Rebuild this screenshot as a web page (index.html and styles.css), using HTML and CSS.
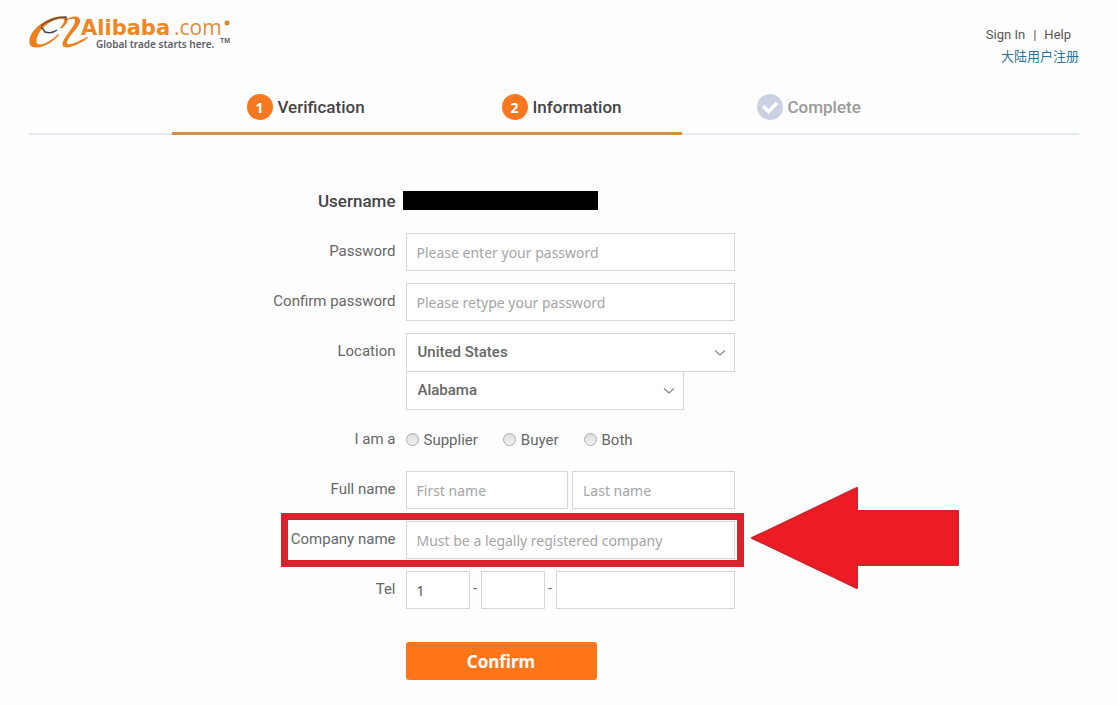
FILE: index.html
```html
<!DOCTYPE html>
<html lang="en">
<head>
<meta charset="utf-8">
<title>Alibaba.com - Registration</title>
<link rel="stylesheet" href="styles.css">
</head>
<body>
<div class="page">
  <header class="header">
    <a class="logo" href="#" aria-label="Alibaba.com">
      <svg width="206" height="38" viewBox="0 0 206 38" role="img">
        <path d="M37 3C26 0 9 9 3 19C-1 26-1 33 6 33.500C15 34 24 28 30 21L29 20C22 27 13 32 9 30C5 28 9 18 16 12C23 6 31 4 34 5C37 6 34 10 31 14L33 14.500C38 10 41 5 37 3Z" fill="#ee7f1d"/>
        <path d="M37 6C42 2 50 1 51 6C52 12 40 21 38 28C37 33 47 29 58 23L59 24C49 31 37 36 34 32C31 27 44 15 46 8C47 4 42 4 37 7Z" fill="#ee7f1d"/>
        <path d="M12 12Q23 3 37 3L37 6" fill="none" stroke="#6b4a36" stroke-width="1.300"/>
        <path d="M12 13L14 15L16 18Q23 20 28 16" fill="none" stroke="#45464c" stroke-width="1.500"/>
        <text class="logo-name" x="52" y="21">Alibaba</text>
        <text class="logo-com" x="145" y="21">.com</text>
        <circle cx="198" cy="9" r="2.500" fill="#d98a2c"/>
        <text class="logo-tag" x="67" y="34">Global trade starts here.</text>
        <text class="logo-tm" x="191" y="29">TM</text>
      </svg>
    </a>
    <nav class="account">
      <div class="account-links"><a href="#">Sign In</a><span>|</span><a href="#">Help</a></div>
      <a class="cn-link" href="#" lang="zh-CN">大陆用户注册</a>
    </nav>
  </header>

  <ol class="steps">
    <li class="step active"><span class="badge">1</span>Verification</li>
    <li class="step active"><span class="badge">2</span>Information</li>
    <li class="step"><span class="badge"><svg width="18" height="16" viewBox="0 0 18 16"><path d="M2 7L7.500 12.500L16 4" fill="none" stroke="#fff" stroke-width="3.500"/></svg></span>Complete</li>
  </ol>

  <form class="form">
    <div class="row">
      <span class="label strong">Username</span>
      <div class="field"><span class="redacted"></span></div>
    </div>
    <div class="row">
      <label class="label" for="password">Password</label>
      <div class="field"><input class="text" id="password" type="password" placeholder="Please enter your password"></div>
    </div>
    <div class="row">
      <label class="label" for="confirm">Confirm password</label>
      <div class="field"><input class="text" id="confirm" type="password" placeholder="Please retype your password"></div>
    </div>
    <div class="row">
      <label class="label" for="country">Location</label>
      <div class="field">
        <div class="picker">
          <select id="country"><option>United States</option></select>
          <svg class="chevron" width="12" height="8" viewBox="0 0 12 8"><path d="M1 1.500L6 6L11 1.500" fill="none" stroke="#888" stroke-width="1.300"/></svg>
        </div>
        <div class="picker state">
          <select id="state" aria-label="State"><option>Alabama</option></select>
          <svg class="chevron" width="12" height="8" viewBox="0 0 12 8"><path d="M1 1.500L6 6L11 1.500" fill="none" stroke="#888" stroke-width="1.300"/></svg>
        </div>
      </div>
    </div>
    <div class="row">
      <span class="label" id="role-label">I am a</span>
      <div class="field roles" role="radiogroup" aria-labelledby="role-label">
        <label class="role"><input type="radio" name="role">Supplier</label>
        <label class="role"><input type="radio" name="role">Buyer</label>
        <label class="role"><input type="radio" name="role">Both</label>
      </div>
    </div>
    <div class="row">
      <label class="label" for="first">Full name</label>
      <div class="field names">
        <input class="text" id="first" type="text" placeholder="First name">
        <input class="text" type="text" placeholder="Last name" aria-label="Last name">
      </div>
    </div>
    <div class="row">
      <label class="label" for="company">Company name</label>
      <div class="field">
        <input class="text" id="company" type="text" placeholder="Must be a legally registered company">
        <span class="highlight"></span>
        <svg class="arrow" width="210" height="104" viewBox="0 0 210 104"><path d="M2 52L107 2V25H208V79H107V102Z" fill="#ed1c24" stroke="#d3222c" stroke-width="2" stroke-linejoin="round"/></svg>
      </div>
    </div>
    <div class="row">
      <label class="label" for="tel">Tel</label>
      <div class="field tel">
        <input class="text code" id="tel" type="text" value="1">
        <span class="dash">-</span>
        <input class="text code" type="text" aria-label="Area code">
        <span class="dash">-</span>
        <input class="text" type="text" aria-label="Phone number">
      </div>
    </div>
    <div class="row actions">
      <button class="confirm" type="button">Confirm</button>
    </div>
  </form>
</div>
</body>
</html>
```
FILE: styles.css
```css
* { box-sizing: border-box; }

body {
  margin: 0;
  background: #fefefe;
  color: #666;
  font: 15px/20px Roboto, sans-serif;
}

a { color: inherit; text-decoration: none; }

.page { padding: 14px 39px 24px 29px; }

.header { display: flex; justify-content: space-between; }
.logo svg { display: block; overflow: visible; }
.logo-name { font: bold 21px "DejaVu Sans", sans-serif; fill: #f0861f; }
.logo-com { font: 400 21px "Open Sans", sans-serif; fill: #e58a35; }
.logo-tag { font: 600 10px "Noto Sans", sans-serif; fill: #5d5d66; }
.logo-tm { font: bold 7px "Liberation Sans", sans-serif; fill: #5d5d66; }

.account {
  display: flex;
  flex-direction: column;
  align-items: flex-end;
  padding-top: 10px;
  font-size: 13px;
  line-height: 21px;
}
.account-links { display: flex; gap: 8px; padding-right: 8px; color: #555; }
.cn-link { color: #2c7397; font-family: "Noto Sans CJK SC", sans-serif; }

.steps {
  display: flex;
  justify-content: center;
  margin: 14px 0 0;
  padding: 0;
  list-style: none;
  box-shadow: inset 0 -2px #e3e9f1;
}
.step {
  display: flex;
  align-items: center;
  gap: 5px;
  width: 255px;
  height: 55px;
  padding: 2px 0 0 75px;
  color: #999;
  font-size: 17px;
  font-weight: 500;
  border-bottom: 3px solid transparent;
}
.step.active { color: #444; border-color: #d88b42; }
.badge {
  display: grid;
  place-items: center;
  width: 26px;
  height: 26px;
  border-radius: 50%;
  background: #cbd1e2;
  color: #fff;
  font: bold 14px "Open Sans", sans-serif;
}
.active .badge { background: #f9771f; }

.form { display: grid; gap: 12px; margin-top: 48px; }
.row { display: grid; grid-template-columns: calc(35% - 1px) 1fr; column-gap: 10px; }
.label { line-height: 37px; text-align: right; }
.strong { color: #444; font-size: 17px; font-weight: 500; }
.field { position: relative; width: 329px; min-height: 38px; }
.redacted { display: block; width: 195px; height: 19px; margin: 8px 0 0 -3px; background: #000; }

.text {
  width: 100%;
  min-width: 0;
  height: 38px;
  padding: 1px 10px 0;
  border: 1px solid #d6d6d6;
  border-radius: 0;
  background: #fff;
  color: #555;
  font: 14px "Noto Sans", sans-serif;
  display: block;
}
.text::placeholder { color: #a5a5a5; opacity: 1; }

.picker { position: relative; height: 38px; }
.picker.state { width: 278px; }
.picker select {
  display: block;
  width: 100%;
  height: 39px;
  padding: 0 30px 2px 11px;
  border: 1px solid #d6d6d6;
  border-radius: 0;
  background: #fff;
  color: #666;
  font: 500 15px Roboto, sans-serif;
  appearance: none;
}
.chevron { position: absolute; right: 9px; top: 16px; pointer-events: none; }

.roles { display: flex; gap: 25px; }
.role { display: flex; align-items: center; gap: 5px; height: 37px; }
.role input {
  width: 13px;
  height: 13px;
  margin: 0;
  border: 1px solid #aaa;
  border-radius: 50%;
  background: linear-gradient(#ddd, #f4f4f4);
  appearance: none;
}

.names { display: flex; gap: 4px; }
.tel { display: flex; }
.tel .code { flex: 0 0 64px; }
.dash { flex: 0 0 11px; line-height: 34px; text-align: center; }

.highlight {
  position: absolute;
  inset: -8px -9px -8px -125px;
  border: 7px solid #d9222c;
  pointer-events: none;
}
.arrow { position: absolute; left: 344px; top: -35px; }

.actions { margin-top: 21px; }
.confirm {
  grid-column: 2;
  width: 191px;
  height: 38px;
  border: 0;
  border-radius: 3px;
  background: #ff7519;
  color: #fff;
  font: bold 17px "Noto Sans", sans-serif;
}
```
